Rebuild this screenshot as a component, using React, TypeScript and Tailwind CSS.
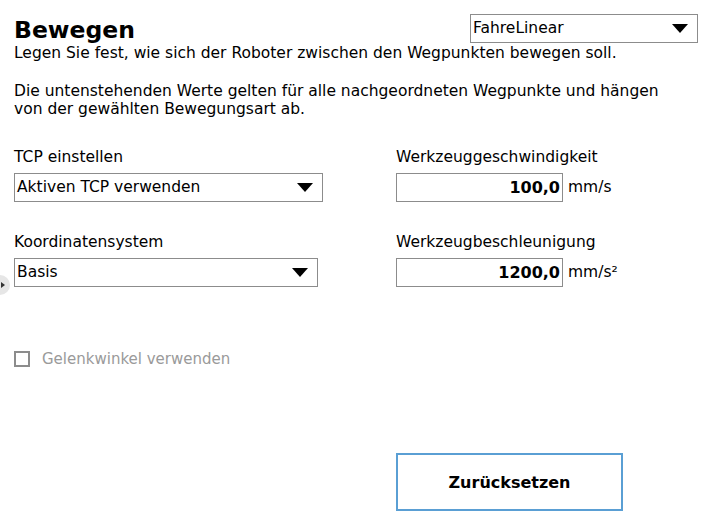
import React from "react";

const Arrow = () => (
  <svg width="16" height="9" viewBox="0 0 16 9" className="shrink-0">
    <polygon points="0,0 16,0 8,9" fill="#000" />
  </svg>
);

const Select = ({ label, width }: { label: string; width: string }) => (
  <div className={`${width} h-[29px] border border-[#8c8c8c] bg-white flex items-center justify-between pl-[2px] pr-[9px]`}>
    <span className="text-[15.5px] text-black leading-none mt-[1px]">{label}</span>
    <Arrow />
  </div>
);

const NumField = ({ value, unit }: { value: string; unit: string }) => (
  <div className="flex items-center">
    <div className="w-[167px] h-[29px] border border-[#8c8c8c] bg-white flex items-center justify-end pr-[2px]">
      <span className="text-[16px] font-bold text-black leading-none mt-[1px]">{value}</span>
    </div>
    <span className="ml-[5px] text-[15.5px] text-black">{unit}</span>
  </div>
);

export default function App() {
  return (
    <div
      className="relative w-[709px] h-[528px] bg-white overflow-hidden text-black"
      style={{ fontFamily: '"DejaVu Sans", sans-serif' }}
    >
      <div className="pl-[14px] pt-[15px]">
        <div className="flex items-start justify-between pr-[11px] h-[29px]">
          <h1 className="text-[23.5px] font-bold leading-[28px] mt-[1px]">Bewegen</h1>
          <div className="-mt-[1px]">
            <Select label="FahreLinear" width="w-[228px]" />
          </div>
        </div>
        <p className="text-[15.5px] leading-[18px]">
          Legen Sie fest, wie sich der Roboter zwischen den Wegpunkten bewegen soll.
        </p>
        <p className="text-[15.5px] leading-[18px] mt-[20px] w-[650px]">
          Die untenstehenden Werte gelten für alle nachgeordneten Wegpunkte und hängen von der gewählten
          Bewegungsart ab.
        </p>

        <div className="grid grid-cols-[382px_1fr] mt-[30px]">
          <div>
            <div className="text-[15.5px] leading-[18px]">TCP einstellen</div>
            <div className="mt-[7px]">
              <Select label="Aktiven TCP verwenden" width="w-[309px]" />
            </div>
            <div className="text-[15.5px] leading-[18px] mt-[31px]">Koordinatensystem</div>
            <div className="mt-[7px]">
              <Select label="Basis" width="w-[304px]" />
            </div>
          </div>
          <div>
            <div className="text-[15.5px] leading-[18px]">Werkzeuggeschwindigkeit</div>
            <div className="mt-[7px]">
              <NumField value="100,0" unit="mm/s" />
            </div>
            <div className="text-[15.5px] leading-[18px] mt-[31px]">Werkzeugbeschleunigung</div>
            <div className="mt-[7px]">
              <NumField value="1200,0" unit="mm/s²" />
            </div>
          </div>
        </div>

        <div className="flex items-center mt-[63px] h-[18px]">
          <div className="w-[16px] h-[16px] border-2 border-[#8c8c8c] bg-white" />
          <span className="ml-[12px] text-[15px] leading-[18px] text-[#9a9a9a]">Gelenkwinkel verwenden</span>
        </div>

        <div className="ml-[382px] mt-[85px] w-[227px] h-[58px] border-2 border-[#5a9fd4] flex items-center justify-center">
          <span className="text-[16px] font-bold mt-[2px]">Zurücksetzen</span>
        </div>
      </div>

      <div className="absolute left-[-10px] top-[275px] w-[20px] h-[20px] rounded-full bg-[#e6e6e6] flex items-center justify-end pr-[5px]">
        <svg width="4" height="6" viewBox="0 0 4 6">
          <polygon points="0,0 4,3 0,6" fill="#333" />
        </svg>
      </div>
    </div>
  );
}
